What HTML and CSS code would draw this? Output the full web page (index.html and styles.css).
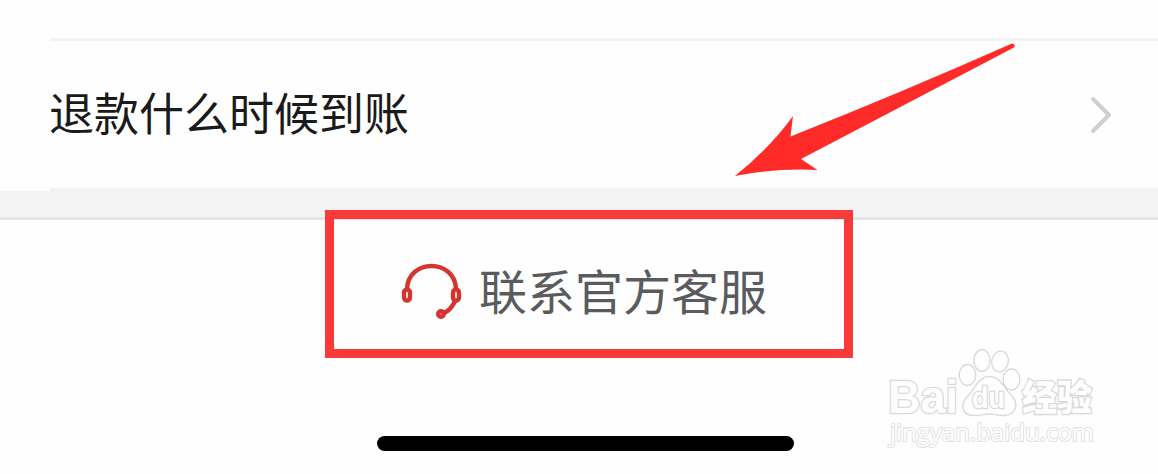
FILE: index.html
```
<!DOCTYPE html>
<html lang="zh-CN">
<head>
    <meta charset="utf-8">
    <title>联系官方客服</title>
    <link rel="stylesheet" href="styles.css">
</head>
<body>
    <ul class="question-list">
        <li class="question">
            <span class="question-title">退款什么时候到账</span>
            <svg class="chevron" width="22" height="38" viewBox="0 0 22 38">
                <path d="M3 3 L19 19 L3 35"/>
            </svg>
        </li>
    </ul>
    <div class="spacer"></div>

    <div class="service">
        <svg class="headset" width="62" height="58" viewBox="401 262 62 58">
            <path d="M407 290 C407 258 456 258 456 290"/>
            <rect x="404" y="289.500" width="6" height="11" rx="3"/>
            <rect x="453" y="289.500" width="6" height="11" rx="3"/>
            <path d="M455 301 Q451 310 444 313"/>
            <circle cx="441" cy="314" r="2.800"/>
        </svg>
        <span class="service-title">联系官方客服</span>
    </div>
    <div class="home-bar"></div>

    <!-- annotations -->
    <div class="highlight"></div>
    <svg class="arrow" width="284" height="138" viewBox="733 42 284 138">
        <path d="M735 176 Q770 148 793 116 L790.500 136.500 Q900 93 1012 43.500 Q1016 44 1014 47.500 L801 159 L817.500 170 Q775 168 735 176 Z"/>
    </svg>

    <svg class="watermark" width="220" height="120" viewBox="880 340 220 120">
        <text class="mark-name" x="888" y="413" textLength="70" lengthAdjust="spacingAndGlyphs">Bai</text>
        <ellipse cx="967.500" cy="375" rx="8.300" ry="10.500"/>
        <ellipse cx="982" cy="360.500" rx="8" ry="11"/>
        <ellipse cx="1000" cy="361.500" rx="8.300" ry="10.500" transform="rotate(10 1000 361.500)"/>
        <ellipse cx="1011.500" cy="379.500" rx="8.500" ry="10.500"/>
        <path d="M989 376.500 C978 376.500 975 390 967 397 C959 406 963 415.500 974 415.500 C982 415.500 984 414 989 414 C994 414 997 415.500 1004 415.500 C1016 415 1019 404 1012 396 C1004 389 1001 376.500 989 376.500 Z"/>
        <text class="mark-du" x="972" y="408" textLength="33" lengthAdjust="spacingAndGlyphs">du</text>
        <text class="mark-cjk" x="1022" y="411" textLength="70" lengthAdjust="spacingAndGlyphs">经验</text>
        <text class="mark-url" x="890" y="441" textLength="204" lengthAdjust="spacingAndGlyphs">jingyan.baidu.com</text>
    </svg>
</body>
</html>
```
FILE: styles.css
```
body {
    position: relative;
    height: 474px;
    margin: 0;
    overflow: hidden;
    background-color: #fefefe;
    font-family: "Liberation Sans", "Noto Sans CJK SC", sans-serif;
}

.question-list {
    margin: 0;
    padding: 38px 0 0 50px;
    list-style-type: none;
}
.question {
    display: flex;
    align-items: center;
    justify-content: space-between;
    height: 147px;
    padding-right: 46px;
    border-top: 3px solid #f3f3f3;
    border-bottom: 3px solid #f3f3f3;
}
.question-title {margin-left: -1px; padding-top: 3px; font-size: 45px; line-height: 60px; color: #1a1a1a;}
.chevron {fill: none; stroke: #cfcfcf; stroke-width: 4; stroke-linecap: round; stroke-linejoin: round;}
.spacer {height: 26px; background-color: #f3f3f3; border-bottom: 3px solid #e4e4e4;}

.service {
    display: flex;
    align-items: center;
    height: 142px;
    padding: 0 0 0 401px;
}
.headset {fill: none; stroke: #d5342f; stroke-width: 4.4;}
.service-title {margin-left: 16px; padding-top: 6px; font-size: 48px; line-height: 60px; color: #5a5b5d;}

.home-bar {
    width: 417px;
    height: 15px;
    margin: 74px 0 0 377px;
    border-radius: 8px;
    background-color: #000;
}

.highlight {
    position: absolute;
    left: 325px;
    top: 210px;
    box-sizing: border-box;
    width: 528px;
    height: 148px;
    border: 9px solid #f83a3b;
}
.arrow {position: absolute; left: 733px; top: 42px; fill: #fe2b28;}

.watermark {
    position: absolute;
    left: 880px;
    top: 340px;
    fill: #fefefe;
    stroke: #dadada;
    stroke-width: 1.4;
}
.watermark text {paint-order: stroke; stroke-width: 2.6;}
.mark-name {font-size: 46px; font-weight: bold;}
.mark-du {font-size: 29px; font-weight: bold;}
.mark-cjk {font-family: "Noto Sans CJK SC", sans-serif; font-size: 36px; font-weight: 900;}
.watermark .mark-url {font-family: "Open Sans", sans-serif; font-size: 24px; stroke: #e2e2e2; stroke-width: 2;}
```
